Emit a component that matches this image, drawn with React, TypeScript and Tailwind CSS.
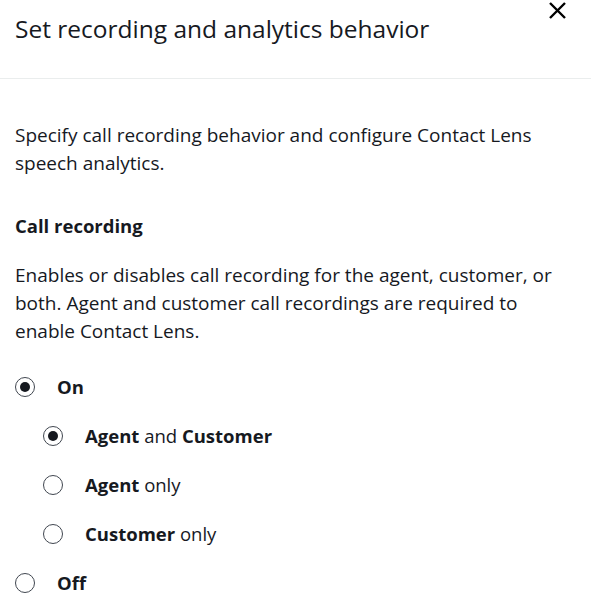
import React from 'react';

const Radio = ({ checked }: { checked?: boolean }) => (
  <span className="flex h-5 w-5 shrink-0 items-center justify-center rounded-full border-[1.5px] border-[#414750] bg-white">
    {checked && <span className="h-[10px] w-[10px] rounded-full bg-[#16191f]" />}
  </span>
);

const Option = ({
  checked,
  indent,
  children,
}: {
  checked?: boolean;
  indent?: boolean;
  children: React.ReactNode;
}) => (
  <div className={`flex h-7 items-center gap-[22px] ${indent ? 'pl-[28px]' : ''}`}>
    <Radio checked={checked} />
    <span className="text-[18.5px] leading-7">{children}</span>
  </div>
);

export default function App() {
  return (
    <div
      className="min-h-screen w-[591px] bg-white text-[#16191f]"
      style={{ fontFamily: '"Open Sans", "Noto Sans", sans-serif' }}
    >
      {/* Header */}
      <div className="flex h-[79px] items-start justify-between border-b border-[#eaeded] pl-[15px] pr-[25px]">
        <h1 className="pt-[14px] text-[24.5px] leading-[30px] font-normal">
          Set recording and analytics behavior
        </h1>
        <button className="mt-[2px] text-black">
          <svg width="17" height="17" viewBox="0 0 17 17" fill="none" stroke="currentColor" strokeWidth="2.4">
            <path d="M1 1L16 16M16 1L1 16" />
          </svg>
        </button>
      </div>

      {/* Body */}
      <div className="pl-[15px] pr-[25px] pt-[42px]">
        <p className="text-[19px] leading-7">
          Specify call recording behavior and configure Contact Lens speech analytics.
        </p>
        <h2 className="mt-[35px] text-[18.5px] leading-7 font-bold">Call recording</h2>
        <p className="mt-[21px] text-[19px] leading-7">
          Enables or disables call recording for the agent, customer, or both. Agent and customer
          call recordings are required to enable Contact Lens.
        </p>

        <div className="mt-[28px] flex flex-col gap-[21px]">
          <Option checked>
            <b>On</b>
          </Option>
          <Option checked indent>
            <b>Agent</b> and <b>Customer</b>
          </Option>
          <Option indent>
            <b>Agent</b> only
          </Option>
          <Option indent>
            <b>Customer</b> only
          </Option>
          <Option>
            <b>Off</b>
          </Option>
        </div>
      </div>
    </div>
  );
}
